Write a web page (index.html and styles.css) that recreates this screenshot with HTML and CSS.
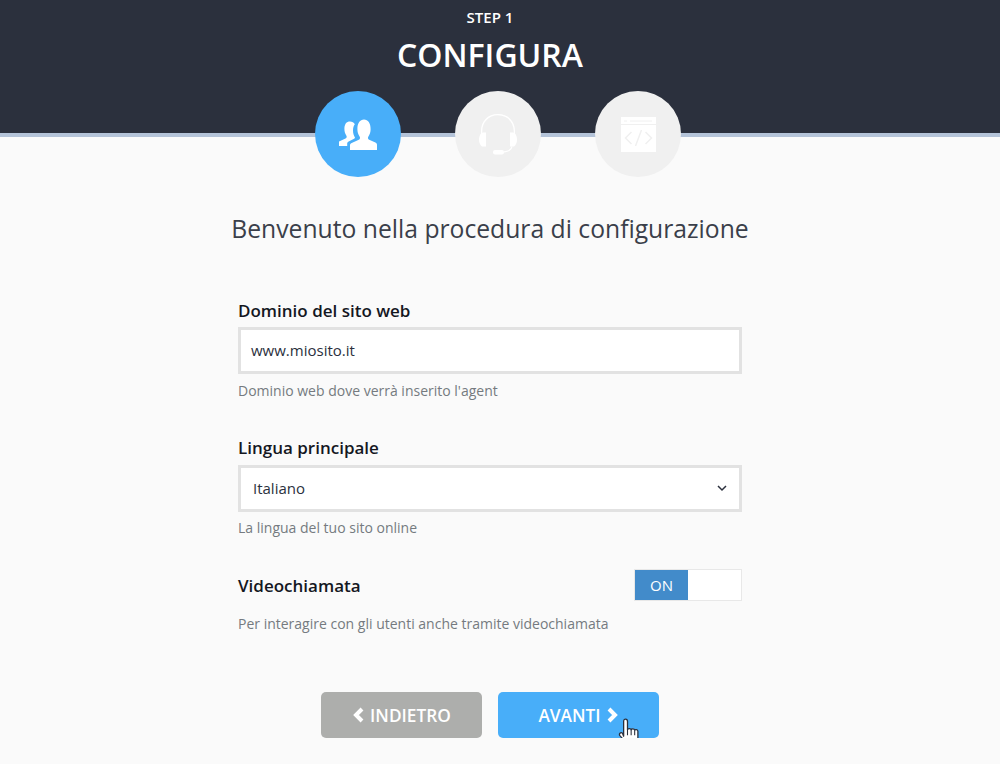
FILE: index.html
```html
<!DOCTYPE html>
<html lang="it">
<head>
    <meta charset="UTF-8">
    <meta name="viewport" content="width=device-width, initial-scale=1.0">
    <title>Configura</title>
    <link rel="stylesheet" href="styles.css">
</head>
<body>

    <header class="top">
        <div class="step-label">STEP 1</div>
        <h1>CONFIGURA</h1>
        <div class="steps">
            <div class="step-circle active">
                <svg width="38" height="31" viewBox="0 0 38 31" fill="#fff">
                    <path d="M0 27v-4.500l6.500-3c1.200-.6 1.500-1.600.9-2.800C6 14.700 5.400 12.500 5.400 9.800 5.400 5 7.500 2.500 11 2.500c2.200 0 3.800.9 4.800 2.700-1.200 1.700-1.800 3.800-1.800 6.300 0 2.600.7 5 2 7-.2.700-.7 1.200-1.400 1.600l-5 2.300c-.9.500-1.300 1.100-1.400 2V27z"/>
                    <path d="M11 31v-5c0-.8.4-1.400 1.200-1.800l7.600-3.500c1.300-.6 1.600-1.900.8-3.200-1.500-2.200-2.200-4.500-2.200-7.200C18.400 4 21 .5 25 .5s6.600 3.500 6.600 9.800c0 2.700-.7 5-2.200 7.200-.8 1.300-.5 2.600.8 3.200l6.200 2.900c1.100.5 1.600 1.200 1.600 2.400v5z"/>
                </svg>
            </div>
            <div class="step-circle">
                <svg width="38" height="41" viewBox="0 0 38 41" fill="#fff">
                    <path d="M19 0C8.500 0 2 7.500 2 17v4h1.300v-4C3.300 8.500 9.500 1.300 19 1.300S34.700 8.500 34.700 17v4H36v-4C36 7.500 29.500 0 19 0z"/>
                    <path d="M2 19.500C.7 21 0 23 0 25.500c0 3 1 5.500 3 7h4V18.500H4z"/>
                    <path d="M36 19.500c1.300 1.500 2 3.500 2 6 0 3-1 5.500-3 7h-4V18.500h3z"/>
                    <path d="M33.500 32.500c-.5 3.500-3.500 5.500-8.500 6v-1.200c4-.4 6.700-2 7.200-4.800z"/>
                    <rect x="14" y="36" width="11" height="4.500" rx="2"/>
                </svg>
            </div>
            <div class="step-circle">
                <svg width="35" height="35" viewBox="0 0 35 35">
                    <path fill="#fff" d="M0 0h35v35H0z"/>
                    <path fill="none" stroke="#f0f0f0" stroke-width="1" d="M0 7.500h35M3 4h3M9 4h22"/>
                    <path fill="none" stroke="#f0f0f0" stroke-width="1.500" d="M10.500 15l-6 6 6 6M24.500 15l6 6-6 6M20.500 13l-6 16"/>
                </svg>
            </div>
        </div>
    </header>

    <main class="content">
        <h2>Benvenuto nella procedura di configurazione</h2>

        <form class="setup-form">
            <div class="field">
                <label class="field-label">Dominio del sito web</label>
                <div class="text-box">www.miosito.it</div>
                <p class="hint">Dominio web dove verrà inserito l'agent</p>
            </div>

            <div class="field">
                <label class="field-label">Lingua principale</label>
                <div class="text-box select-box">
                    Italiano
                    <svg width="10" height="7" viewBox="0 0 10 7"><path d="M1 1l4 4 4-4" fill="none" stroke="#2b303d" stroke-width="1.500"/></svg>
                </div>
                <p class="hint">La lingua del tuo sito online</p>
            </div>

            <div class="field field-switch">
                <div class="switch-row">
                    <label class="field-label">Videochiamata</label>
                    <div class="switch">
                        <span class="switch-on">ON</span>
                        <span class="switch-off"></span>
                    </div>
                </div>
                <p class="hint">Per interagire con gli utenti anche tramite videochiamata</p>
            </div>
        </form>

        <div class="actions">
            <button class="btn btn-back" type="button">
                <svg width="13" height="16" viewBox="0 0 13 16"><path d="M10 2L4 8l6 6" fill="none" stroke="#fff" stroke-width="4"/></svg>
                INDIETRO
            </button>
            <button class="btn btn-next" type="button">
                AVANTI
                <svg width="13" height="16" viewBox="0 0 13 16"><path d="M3 2l6 6-6 6" fill="none" stroke="#fff" stroke-width="4"/></svg>
                <svg class="cursor" width="24" height="30" viewBox="0 0 22 28">
                    <path fill="#fff" stroke="#2b303d" stroke-width="1.200" stroke-linejoin="round" d="M6 17V3.200C6 1.800 6.800 1 7.800 1s1.800.8 1.800 2.200V11c0-1.200 3.200-1.500 3.400 0 .2-1.200 3.100-1.200 3.300.4.400-1 2.900-.8 3 .9v6.200c0 2.500-.6 3.800-1.400 5.500v2.500H9.500v-2c-1.500-1.600-3.200-3.800-6.800-7.800-1.600-1.900.6-3.900 2.200-2.500z"/>
                    <path fill="none" stroke="#2b303d" stroke-width="1" d="M9.600 11v5M13 11v5M16.300 11.500V16"/>
                </svg>
            </button>
        </div>
    </main>

</body>
</html>
```

FILE: styles.css
```css
body {
    font-family: "Open Sans", sans-serif;
    margin: 0;
    padding: 0;
    background-color: #fafafa;
    color: #2b303d;
}

.top {
    height: 133px;
    box-sizing: content-box;
    background-color: #2b303d;
    border-bottom: 4px solid #b4c3d8;
    padding-right: 20px;
    text-align: center;
    color: #fff;
}

.step-label {
    padding-top: 7px;
    font-size: 15px;
    line-height: 20px;
    font-weight: 600;
}

h1 {
    margin: 6px 0 0;
    font-size: 32px;
    line-height: 44px;
    font-weight: 600;
}

.steps {
    display: flex;
    justify-content: center;
    gap: 54px;
    margin-top: 14px;
    margin-left: 16px;
}

.step-circle {
    width: 86px;
    height: 86px;
    border-radius: 50%;
    background-color: #f0f0f0;
    display: flex;
    justify-content: center;
    align-items: center;
}

.step-circle.active {
    background-color: #48aef9;
}

.content {
    padding-right: 20px;
}

h2 {
    margin: 75px 0 0;
    text-align: center;
    font-size: 24.7px;
    line-height: 34px;
    font-weight: 400;
    color: #3a3f4a;
}

.setup-form {
    width: 504px;
    margin: 53px auto 0;
}

.field {
    margin-bottom: 36px;
}

.field-switch {
    margin-top: -4px;
}

.field-label {
    display: block;
    font-size: 17px;
    line-height: 23px;
    font-weight: 600;
    color: #14171f;
}

.text-box {
    box-sizing: border-box;
    height: 47px;
    margin-top: 5px;
    padding: 0 10px;
    border: 3px solid #e2e2e2;
    background-color: #fff;
    font-size: 15px;
    line-height: 41px;
    color: #2b303d;
}

.select-box {
    display: flex;
    justify-content: space-between;
    align-items: center;
    margin-top: 6px;
    padding: 0 12px;
}

.select-box + .hint {
    margin-top: 6px;
}

.hint {
    margin: 7px 0 0;
    font-size: 14px;
    line-height: 19px;
    color: #757a80;
}

.switch-row {
    display: flex;
    justify-content: space-between;
    align-items: center;
}

.switch-row + .hint {
    margin-top: 13px;
}

.switch {
    display: flex;
    box-sizing: border-box;
    width: 108px;
    height: 32px;
    border: 1px solid #e8e8e8;
    background-color: #fff;
}

.switch-on {
    width: 53px;
    background-color: #428bca;
    color: #fff;
    text-align: center;
    font-size: 15px;
    line-height: 30px;
}

.switch-off {
    flex: 1;
}

.actions {
    display: flex;
    justify-content: center;
    gap: 16px;
    margin-top: 59px;
}

.btn {
    position: relative;
    display: flex;
    justify-content: center;
    align-items: center;
    gap: 5px;
    width: 161px;
    height: 46px;
    padding: 0;
    border: none;
    border-radius: 5px;
    color: #fff;
    font-family: inherit;
    font-size: 17.3px;
    font-weight: 600;
}

.btn-back {
    background-color: #adaeac;
}

.btn-next {
    background-color: #48aef9;
}

.cursor {
    position: absolute;
    left: 119px;
    top: 26px;
}
```
